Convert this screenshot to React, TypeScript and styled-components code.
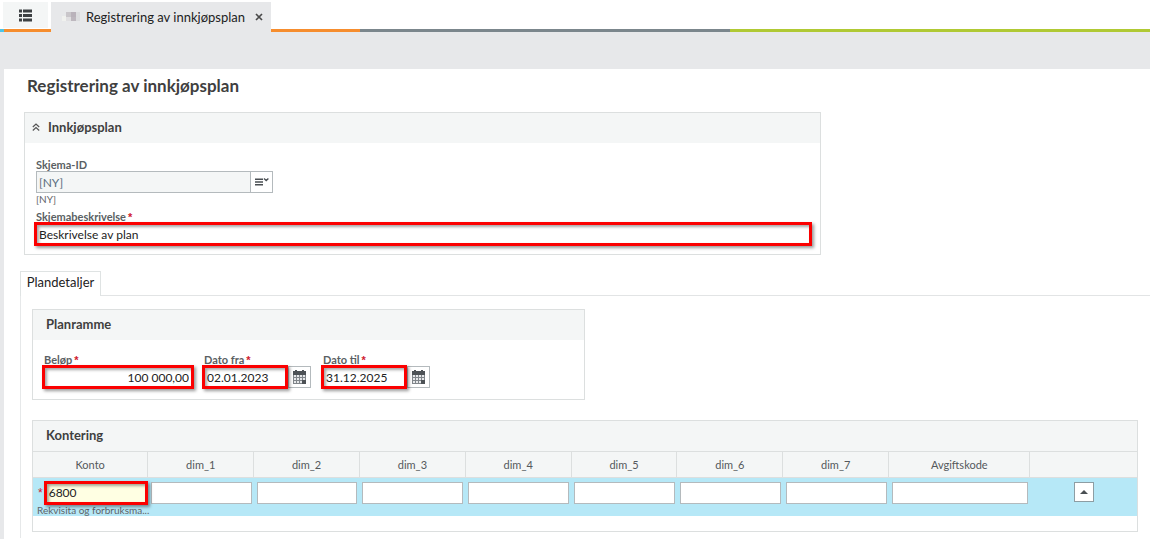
import React from "react";
import styled, { createGlobalStyle, css } from "styled-components";

const sans = `Lato, "Liberation Sans", sans-serif`;

const GlobalStyle = createGlobalStyle`
  *, *::before, *::after { box-sizing: border-box; }
  body { margin: 0; background: #fff; color: #444; font-family: ${sans}; font-size: 13px; }
  button, input { font: inherit; color: inherit; margin: 0; }
  h1, h2 { margin: 0; }
`;

const Shell = styled.div`
  min-height: 100vh;
  display: flex;
  flex-direction: column;
  background: #e7e8ea;
`;

const TabStrip = styled.header`
  display: flex;
  align-items: flex-start;
  gap: 3px;
  height: 32px;
  padding: 2px 0 0 3px;
  background:
    linear-gradient(90deg, #4cc5e8 4px, #f68d2e 4px, #f68d2e 31.3%, #7b868c 31.3%, #7b868c 63.5%, #b0c934 63.5%)
      0 100% / 100% 3px no-repeat,
    #fff;
`;

const MenuButton = styled.button`
  display: grid;
  place-items: center;
  width: 45px;
  height: 26px;
  padding: 0;
  border: 0;
  background: #f4f6f6;
`;

const OpenTab = styled.div`
  display: flex;
  align-items: center;
  height: 30px;
  padding: 0 8px 0 11px;
  background: #e7e8ea;
  color: #222;
  line-height: 16px;
  white-space: nowrap;
`;

const TabTitle = styled.span`
  width: 160px;
  margin: 0 9px 0 6px;
`;

const CloseButton = styled.button`
  display: grid;
  place-items: center;
  width: 8px;
  height: 16px;
  padding: 0;
  border: 0;
  background: none;
`;

const Page = styled.main`
  flex: 1;
  margin: 37px 0 0 4px;
  padding: 8px 0 0 16px;
  background: #fff;
`;

const PageTitle = styled.h1`
  margin-left: 7px;
  font-size: 17px;
  line-height: 17px;
  font-weight: 700;
  color: #3f3f3f;
`;

const Panel = styled.section<{ $max?: number }>`
  border: 1px solid #dcdfdf;
  ${(p) => p.$max && css`max-width: ${p.$max}px;`}
`;

const PanelHeader = styled.div`
  display: flex;
  align-items: center;
  height: 30px;
  padding: 0 13px 2px;
  background: #f4f6f6;
`;

const PanelTitle = styled.h2`
  font-size: 13px;
  line-height: 16px;
  font-weight: 700;
  color: #3f3f3f;
`;

const CollapseButton = styled.button`
  display: grid;
  place-items: center;
  width: 8px;
  height: 16px;
  margin: 0 8px 0 -6px;
  padding: 0;
  border: 0;
  background: none;
`;

const PlanBlock = styled.div`
  margin: 18px 16px 0 4px;
`;

const PlanFields = styled.div`
  display: flex;
  flex-direction: column;
  gap: 6px;
  padding: 16px 10px 9px 11px;
`;

const Label = styled.label`
  display: block;
  height: 12px;
  font-size: 11px;
  line-height: 12px;
  font-weight: 700;
  color: #5a5f63;
  white-space: nowrap;
`;

const Star = styled.span`
  margin-left: 2px;
  color: #d0202f;
  font-family: "Liberation Sans", sans-serif;
`;

const Hint = styled.div`
  height: 12px;
  font-size: 10px;
  line-height: 12px;
  color: #5f6468;
  white-space: nowrap;
`;

const Combo = styled.div`
  display: flex;
  width: 237px;
`;

const Input = styled.input<{ $right?: boolean }>`
  display: block;
  width: 100%;
  min-width: 0;
  height: 22px;
  padding: 0 2px;
  border: 1px solid #b4babd;
  border-radius: 0;
  outline: 0;
  background: #fff;
  color: #222;
  font-size: 12px;
  text-align: ${(p) => (p.$right ? "right" : "left")};

  &:disabled { background: #f4f6f6; color: #5b6f80; }
`;

const SideButton = styled.button`
  flex: none;
  display: grid;
  place-items: center;
  width: 23px;
  height: 22px;
  margin-left: -1px;
  padding: 0;
  border: 1px solid #b4babd;
  background: #fff;
`;

const Marked = styled.div`
  position: relative;
  flex: 1;
  min-width: 0;

  &::after {
    content: "";
    position: absolute;
    inset: -1px -2px;
    border: 3px solid #fb0000;
    box-shadow: 2px 2px 3px rgba(0, 0, 0, 0.4), inset 2px 2px 3px rgba(0, 0, 0, 0.35);
    pointer-events: none;
  }
`;

const TabBar = styled.div`
  display: flex;
  align-items: flex-end;
  margin-top: 16px;

  &::after {
    content: "";
    flex: 1;
    border-bottom: 1px solid #e2e4e5;
  }
`;

const InnerTab = styled.button`
  width: 81px;
  height: 25px;
  padding: 0 0 4px;
  border: 1px solid #dfe3e3;
  border-bottom: 0;
  background: #fff;
  color: #222;
  font-size: 13px;
  line-height: 16px;
`;

const TabPanel = styled.div`
  display: flex;
  flex-direction: column;
  gap: 20px;
  padding: 13px 12px 6px 11px;
  border-left: 1px solid #e6e8e9;
`;

const FrameFields = styled.div`
  display: flex;
  gap: 12px;
  padding: 14px 11px 11px;
`;

const Field = styled.div<{ $w: number }>`
  width: ${(p) => p.$w}px;
`;

const DateRow = styled.div`
  display: flex;
  gap: 3px;
`;

const Table = styled.table`
  width: 100%;
  table-layout: fixed;
  border-collapse: collapse;
  margin-bottom: 15px;
`;

const Th = styled.th<{ $w?: string }>`
  width: ${(p) => p.$w ?? "auto"};
  height: 26px;
  padding: 0;
  border: 1px solid #dcdfdf;
  border-width: 1px 0 1px 1px;
  background: #f4f6f6;
  color: #55595c;
  font-size: 11px;
  font-weight: 400;

  &:first-child { border-left: 0; }
`;

const Td = styled.td`
  height: 38px;
  padding: 4px 2px 0 3px;
  vertical-align: top;
  background: #b6e8f7;
`;

const AccountRow = styled.div`
  display: flex;
  gap: 3px;
  line-height: 22px;
  font-size: 12px;
`;

const AccountInput = styled(Input)`
  background: #ffffe3;
`;

const AccountHint = styled(Hint)`
  margin-left: 1px;
`;

const UpButton = styled.button`
  display: grid;
  place-items: center;
  width: 20px;
  height: 20px;
  margin: 0 auto;
  padding: 0;
  border: 1px solid #8d9da3;
  background: #fff;
`;

const ListIcon = () => (
  <svg width="13" height="13" viewBox="0 0 13 13" fill="#3d4043" aria-hidden="true">
    <path d="M0 .5h3v3H0zM4 .5h9v3H4zM0 5h3v3H0zM4 5h9v3H4zM0 9.500h3v3H0zM4 9.500h9v3H4z" />
  </svg>
);

const AppMark = () => (
  <svg width="18" height="10" viewBox="0 0 18 10" aria-hidden="true">
    <path fill="#f0f1ee" d="M0 4h4v5H0z" />
    <path fill="#c9c6ca" d="M4 0h5v5H4z" />
    <path fill="#b9b2ba" d="M9 0h5v5H9z" />
    <path fill="#e0dfe1" d="M4 5h5v4H4z" />
    <path fill="#bdb7be" d="M9 5h5v4H9z" />
    <path fill="#dcdddf" d="M14 0h4v9h-4z" />
  </svg>
);

const CloseIcon = () => (
  <svg width="8" height="8" viewBox="0 0 8 8" fill="none" stroke="#4a4a4a" strokeWidth="1.700" aria-hidden="true">
    <path d="M1 1l6 6M7 1L1 7" />
  </svg>
);

const CollapseIcon = () => (
  <svg width="8" height="8" viewBox="0 0 8 8" fill="none" stroke="#555" strokeWidth="1.2" aria-hidden="true">
    <path d="M.8 4L4 1l3.200 3M.8 7.500L4 4.500l3.200 3" />
  </svg>
);

const LookupIcon = () => (
  <svg width="14" height="8" viewBox="0 0 14 8" fill="none" stroke="#4a4f53" aria-hidden="true">
    <path strokeWidth="1.500" d="M0 1.200h8M0 4h8M0 6.800h8" />
    <path strokeWidth="1.400" d="M9 .6l2.200 2 2.200-2" />
  </svg>
);

const CalendarIcon = () => (
  <svg width="13" height="14" viewBox="0 0 13 14" aria-hidden="true">
    <path fill="#4d5256" d="M0 1h2V0h2v1h5V0h2v1h2v4H0z" />
    <path fill="#80858a" d="M0 5h13v9H0z" />
    <path fill="#e6e8ea" d="M1 5h2v2H1zM4 5h2v2H4zM7 5h2v2H7zM10 5h2v2h-2zM1 8h2v2H1zM4 8h2v2H4zM7 8h2v2H7zM10 8h2v2h-2zM1 11h2v2H1zM4 11h2v2H4zM7 11h2v2H7z" />
    <path fill="#4d5256" d="M9 10h4v4H9z" />
  </svg>
);

const UpIcon = () => (
  <svg width="8" height="4" viewBox="0 0 8 4" fill="#4a4f53" aria-hidden="true">
    <path d="M0 4l4-4 4 4z" />
  </svg>
);

const dimensions = ["dim_1", "dim_2", "dim_3", "dim_4", "dim_5", "dim_6", "dim_7"];

function DateField({ id, label, value }: { id: string; label: string; value: string }) {
  return (
    <Field $w={107}>
      <Label htmlFor={id}>
        {label}
        <Star>*</Star>
      </Label>
      <DateRow>
        <Marked>
          <Input id={id} defaultValue={value} />
        </Marked>
        <SideButton type="button" aria-label={`Velg ${label.toLowerCase()}`}>
          <CalendarIcon />
        </SideButton>
      </DateRow>
    </Field>
  );
}

export default function App() {
  return (
    <>
      <GlobalStyle />
      <Shell>
        <TabStrip>
          <MenuButton type="button" aria-label="Meny">
            <ListIcon />
          </MenuButton>
          <OpenTab>
            <AppMark />
            <TabTitle>Registrering av innkjøpsplan</TabTitle>
            <CloseButton type="button" aria-label="Lukk">
              <CloseIcon />
            </CloseButton>
          </OpenTab>
        </TabStrip>
        <Page>
          <PageTitle>Registrering av innkjøpsplan</PageTitle>
          <PlanBlock>
            <Panel $max={797}>
              <PanelHeader>
                <CollapseButton type="button" aria-label="Skjul">
                  <CollapseIcon />
                </CollapseButton>
                <PanelTitle>Innkjøpsplan</PanelTitle>
              </PanelHeader>
              <PlanFields>
                <div>
                  <Label htmlFor="skjema-id">Skjema-ID</Label>
                  <Combo>
                    <Input id="skjema-id" defaultValue="[NY]" disabled />
                    <SideButton type="button" aria-label="Vis liste">
                      <LookupIcon />
                    </SideButton>
                  </Combo>
                  <Hint>[NY]</Hint>
                </div>
                <div>
                  <Label htmlFor="beskrivelse">
                    Skjemabeskrivelse
                    <Star>*</Star>
                  </Label>
                  <Marked>
                    <Input id="beskrivelse" defaultValue="Beskrivelse av plan" />
                  </Marked>
                </div>
              </PlanFields>
            </Panel>
          </PlanBlock>

          <TabBar role="tablist">
            <InnerTab type="button" role="tab" aria-selected="true">
              Plandetaljer
            </InnerTab>
          </TabBar>
          <TabPanel role="tabpanel">
            <Panel $max={553}>
              <PanelHeader>
                <PanelTitle>Planramme</PanelTitle>
              </PanelHeader>
              <FrameFields>
                <Field $w={148}>
                  <Label htmlFor="belop">
                    Beløp
                    <Star>*</Star>
                  </Label>
                  <Marked>
                    <Input id="belop" $right defaultValue="100 000,00" />
                  </Marked>
                </Field>
                <DateField id="fra" label="Dato fra" value="02.01.2023" />
                <DateField id="til" label="Dato til" value="31.12.2025" />
              </FrameFields>
            </Panel>

            <Panel>
              <PanelHeader>
                <PanelTitle>Kontering</PanelTitle>
              </PanelHeader>
              <Table>
                <thead>
                  <tr>
                    <Th $w="10.4%">Konto</Th>
                    {dimensions.map((d) => (
                      <Th key={d}>{d}</Th>
                    ))}
                    <Th $w="12.8%">Avgiftskode</Th>
                    <Th $w="9.7%" aria-label="Handlinger" />
                  </tr>
                </thead>
                <tbody>
                  <tr>
                    <Td>
                      <AccountRow>
                        <Star>*</Star>
                        <Marked>
                          <AccountInput aria-label="Konto" defaultValue="6800" />
                        </Marked>
                      </AccountRow>
                      <AccountHint>Rekvisita og forbruksma...</AccountHint>
                    </Td>
                    {dimensions.map((d) => (
                      <Td key={d}>
                        <Input aria-label={d} />
                      </Td>
                    ))}
                    <Td>
                      <Input aria-label="Avgiftskode" />
                    </Td>
                    <Td>
                      <UpButton type="button" aria-label="Flytt opp">
                        <UpIcon />
                      </UpButton>
                    </Td>
                  </tr>
                </tbody>
              </Table>
            </Panel>
          </TabPanel>
        </Page>
      </Shell>
    </>
  );
}
